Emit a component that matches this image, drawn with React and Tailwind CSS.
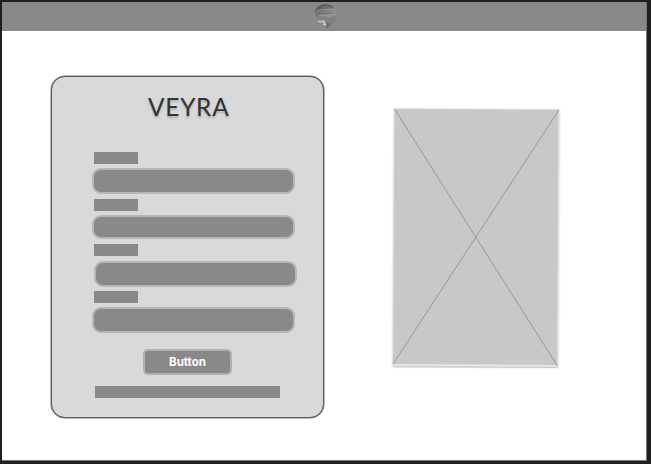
const fields = [
  { label: 'mt-0', input: 'mt-[4px] h-[26px] ml-0' },
  { label: 'mt-[5px]', input: 'mt-[4px] h-[24px] ml-0' },
  { label: 'mt-[5px]', input: 'mt-[5px] h-[26px] ml-[2px]' },
  { label: 'mt-[4px]', input: 'mt-[4px] h-[26px] ml-0' },
];

function Emblem() {
  return (
    <svg className="ml-[3px]" width="24" height="27" viewBox="0 0 24 27" fill="none">
      <defs>
        <linearGradient id="metal" x1="2" y1="2" x2="20" y2="24" gradientUnits="userSpaceOnUse">
          <stop offset="0" stopColor="#5c5c5c" />
          <stop offset="0.3" stopColor="#777777" />
          <stop offset="0.6" stopColor="#8f8f8f" />
          <stop offset="1" stopColor="#747474" />
        </linearGradient>
      </defs>
      <path d="M1 7C3 3 7 1 12 1c5 0 8 2 9 6l2 5c0 4-2 7-5 9l-5 5-4-4-4-4-3-4-1-7Z" fill="url(#metal)" />
      <path d="M3 5c4-5 13-5 17 0-4 1-10-1-17 3Z" fill="#5f5f5f" />
      <path d="M8 5c4-2 8-1 11 1" stroke="#888" strokeWidth="0.8" />
      <path d="M3 8c6-3 11-1 18-1" stroke="#999" strokeWidth="1" />
      <path d="M5 13c5-2 10 1 17-2" stroke="#999" strokeWidth="1.2" />
      <path d="M5 11c5-2 9 1 14-1M7 16c4-1 7 1 12-1" stroke="#717171" strokeWidth="0.8" />
      <path d="m4 18 3 1 2-1 2 3M9 21l3 1" stroke="#c6c6c6" strokeWidth="1.6" />
      <path d="m14 18-1 7 4-5" stroke="#646464" />
    </svg>
  );
}

function ImagePlaceholder() {
  return (
    <svg className="mt-[74px] ml-[64px] shrink-0" width="176" height="268" viewBox="388 105 176 268" fill="none">
      <defs>
        <filter id="soft" x="-5%" y="-5%" width="110%" height="110%">
          <feGaussianBlur stdDeviation="0.9" />
        </filter>
      </defs>
      <path d="M394 109 559.5 110 558 367.5 392.5 366.5Z" fill="#c8c8c8" filter="url(#soft)" />
      <path d="M394 108.3 559.5 109.5 557.7 366.8 392.4 365.5Z" fill="#e9e9e9" />
      <path d="M394.5 108.8 558.5 109.8 557.2 365 393 364Z" fill="#c8c8c8" />
      <path d="M394.5 109 557.5 366M559 109.8 393 364" stroke="#8b8b8b" strokeWidth="0.8" />
      <path d="M392.7 366.8 557.7 367.4" stroke="#bcbcbc" strokeWidth="0.7" />
    </svg>
  );
}

export default function App() {
  return (
    <div className="flex h-[464px] w-[651px] flex-col overflow-hidden border-t-2 border-r-4 border-b-[3px] border-l-2 border-[#201e1f] bg-white">
      <header className="flex h-[29px] shrink-0 justify-center border-r border-[#777] bg-[#8b8889] pt-px">
        <Emblem />
      </header>
      <main className="flex flex-1 items-start border-r border-b border-[#777]">
        <section className="mt-[44.5px] ml-[49px] flex h-[342px] w-[273px] shrink-0 flex-col rounded-[14px] border border-[#5c5c5c] bg-[#d9d9d9] pl-[40px] shadow-[0_0_0_0.5px_#777]">
          <h1 className="mt-[16.5px] ml-[56px] h-[28px] font-['Lato',sans-serif] text-[24.5px] leading-[28px] tracking-[0.7px] text-[#333] [text-shadow:0_2px_2px_#8888]">VEYRA</h1>
          <div className="mt-[31px]">
            {fields.map((field, i) => (
              <div key={i} className="flex flex-col">
                <div className={`ml-[2px] h-3 w-[44px] bg-[#8b8889] ${field.label}`} />
                <div className={`w-[203px] rounded-[9px] border-2 border-[#b7b5b5] bg-[#8b8889] ${field.input}`} />
              </div>
            ))}
          </div>
          <button className="mt-4 ml-[51px] flex h-[26px] w-[89px] items-center justify-center rounded-[5px] border-2 border-[#b1afaf] bg-[#8b8889] pt-px font-['Inter',sans-serif] text-[11.5px] leading-none font-bold text-white">Button</button>
          <div className="mt-[11px] ml-[3px] h-3 w-[185px] bg-[#8b8889]" />
        </section>
        <ImagePlaceholder />
      </main>
    </div>
  );
}
